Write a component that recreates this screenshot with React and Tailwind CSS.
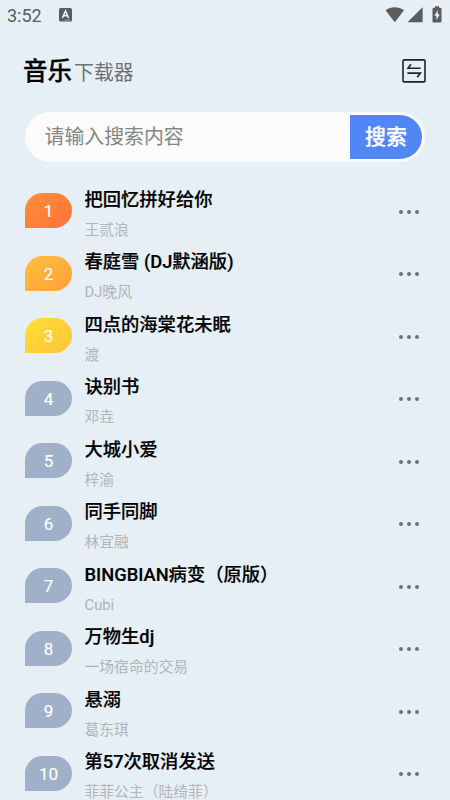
import React from 'react';

const songs = [
  { title: '把回忆拼好给你', artist: '王贰浪' },
  { title: '春庭雪 (DJ默涵版)', artist: 'DJ晚风' },
  { title: '四点的海棠花未眠', artist: '渡' },
  { title: '诀别书', artist: '邓垚' },
  { title: '大城小爱', artist: '梓渝' },
  { title: '同手同脚', artist: '林宜融' },
  { title: 'BINGBIAN病变（原版）', artist: 'Cubi' },
  { title: '万物生dj', artist: '一场宿命的交易' },
  { title: '悬溺', artist: '葛东琪' },
  { title: '第57次取消发送', artist: '菲菲公主（陆绮菲）' },
];

// Top three get their own colours, the rest share the grey-blue one
const badgeColors = [
  'bg-linear-to-br from-[#ff9038] to-[#ff7138]',
  'bg-linear-to-br from-[#ffc03c] to-[#ffa03a]',
  'bg-linear-to-br from-[#ffe034] to-[#fec23a]',
];

const StatusBar = () => (
  <div className="flex h-[30px] items-center justify-between pl-[7px] pr-[8px] text-[#5a5c5e]">
    <div className="flex items-center">
      <span className="text-[18px] leading-[30px] w-[52px] pt-px">3:52</span>
      <svg width="13" height="14" viewBox="0 0 13 14">
        <rect width="13" height="13.5" rx="1.5" fill="currentColor" />
        <path d="M3.4 10 L6.5 3 L9.6 10 M4.6 7.8 H8.4" fill="none" stroke="#eef4f8" strokeWidth="1.6" />
        <path d="M6 12 H11" stroke="#b9bec2" strokeWidth="0.7" />
      </svg>
    </div>
    <svg width="57" height="18" viewBox="0 0 57 18" fill="currentColor" className="block">
      <path d="M0.5 4.2 C5.5 0.2 14 0.2 19 4.2 L9.8 16.2 Z" />
      <path d="M22.5 16.2 L37.6 1.2 V16.2 Z" />
      <path d="M50 0.2 H54 V1.8 H55.4 Q56.5 1.8 56.5 2.9 V15.2 Q56.5 16.4 55.4 16.4 H48.6 Q47.5 16.4 47.5 15.2 V2.9 Q47.5 1.8 48.6 1.8 H50 Z" />
      <path d="M52.9 4 L49.4 9.7 H51.4 V14.2 L54.7 8.3 H52.7 Z" fill="#edf3f6" />
    </svg>
  </div>
);

const Header = () => (
  <div className="mt-[25px] flex h-[32px] items-center justify-between pl-[23px] pr-6">
    <h1 className="flex items-baseline pt-[4px] leading-[32px]">
      <span className="text-[24.5px] font-medium text-black [-webkit-text-stroke:0.3px]">音乐</span>
      <span className="ml-[2px] pt-px text-[19.9px] text-[#6c7174]">下载器</span>
    </h1>
    <button aria-label="切换">
      <svg width="24" height="24" viewBox="0 0 24 24" fill="none" stroke="#202326" strokeWidth="1.6">
        <rect x="1" y="0.9" width="22" height="22" rx="1.2" />
        <path d="M18.6 9.3 H6 L9 5.2" />
        <path d="M5.4 14.1 H18.4 L15.2 18.2" />
      </svg>
    </button>
  </div>
);

const SearchBar = () => (
  <div className="ml-[25px] mr-[25px] mt-[25px] flex h-[50px] items-center justify-between rounded-full bg-[#fbfbfb] pl-[19.5px] pr-[3px]">
    <span className="pt-[2px] text-[19.9px] text-[#858585]">请输入搜索内容</span>
    <button className="h-[44px] w-[72px] rounded-r-full bg-[#5087f5] pt-[2px] text-[21px] font-medium text-white [-webkit-text-stroke:0.3px]">搜索</button>
  </div>
);

const SongRow = ({ song, rank }) => (
  <li className="flex h-[62.5px] items-center border-b border-[#ebeeec]">
    <div
      className={`flex h-[35px] w-[47px] shrink-0 items-center justify-center rounded-full rounded-bl-none text-[17px] text-white ${
        badgeColors[rank - 1] || 'bg-[#9fb0c8]'
      }`}
    >
      <span className="mt-[2px] [-webkit-text-stroke:0.15px]">{rank}</span>
    </div>
    <div className="ml-[12.5px] flex-1 whitespace-nowrap pt-[4px]">
      <p className="text-[18.3px] font-medium leading-[34px] text-black [-webkit-text-stroke:0.2px]">{song.title}</p>
      <p className="text-[14.8px] leading-[26px] text-[#b2b5b7]">{song.artist}</p>
    </div>
    <div className="mr-[6px] mt-[2px] flex gap-1">
      <i className="size-1 rounded-full bg-[#6d7376]" />
      <i className="size-1 rounded-full bg-[#6d7376]" />
      <i className="size-1 rounded-full bg-[#6d7376]" />
    </div>
  </li>
);

export default function App() {
  return (
    <div
      className="h-[800px] w-[450px] overflow-hidden bg-[#e6eff5]"
      style={{ fontFamily: 'Roboto, "Noto Sans CJK SC", sans-serif' }}
    >
      <StatusBar />
      <Header />
      <SearchBar />
      <ul className="ml-[25px] mr-[25px] mt-[18px]">
        {songs.map((song, i) => (
          <SongRow key={song.title} song={song} rank={i + 1} />
        ))}
      </ul>
    </div>
  );
}
